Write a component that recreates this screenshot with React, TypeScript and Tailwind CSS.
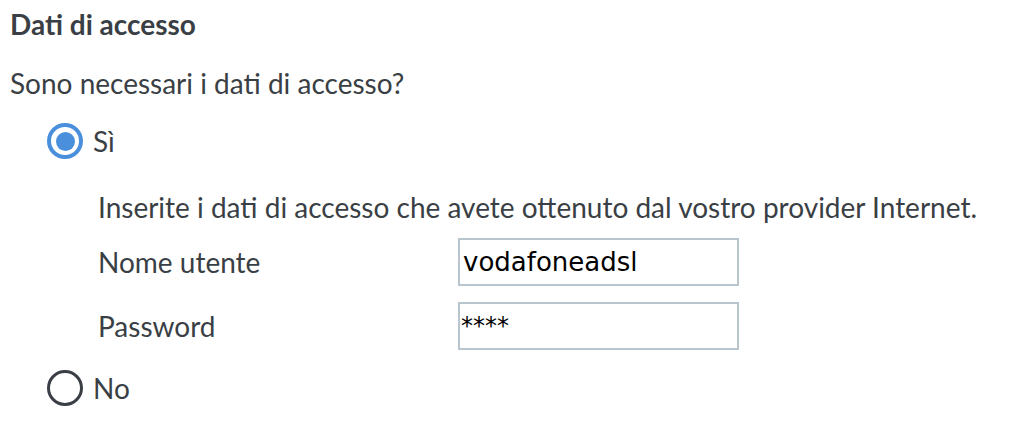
import { useState } from 'react'

function Radio({ checked }: { checked: boolean }) {
  return checked ? (
    <span className="flex h-[36px] w-[36px] items-center justify-center rounded-full border-[4px] border-[#4a8fdb] bg-white">
      <span className="h-[19px] w-[19px] rounded-full bg-[#4a8fdb]"></span>
    </span>
  ) : (
    <span className="block h-[36px] w-[36px] rounded-full border-[3px] border-[#3a3f45] bg-white"></span>
  )
}

export default function App() {
  const [needed, setNeeded] = useState(true)
  const [user, setUser] = useState('vodafoneadsl')
  const [pass, setPass] = useState('****')

  return (
    <div className="h-[436px] w-[1024px] bg-white px-[10px] pt-[7px] font-['Lato','Open_Sans',sans-serif] text-[#3a3f45]">
      <h2 className="text-[28px] font-bold leading-[34px]">Dati di accesso</h2>

      <p className="mt-[25px] text-[28px] leading-[34px]">Sono necessari i dati di accesso?</p>

      <label className="mt-[23px] ml-[37px] flex cursor-pointer items-center gap-[10px] text-[28px] leading-[34px]" onClick={() => setNeeded(true)}>
        <Radio checked={needed} />
        <span>Sì</span>
      </label>

      <div className="ml-[88px]">
        <p className="mt-[31px] text-[28px] leading-[34px]">
          Inserite i dati di accesso che avete ottenuto dal vostro provider Internet.
        </p>

        <div className="mt-[14px] flex items-center">
          <span className="w-[360px] text-[28px] leading-[34px]">Nome utente</span>
          <input
            className="h-[48px] w-[281px] border-2 border-[#b9c5cd] px-[3px] font-['DejaVu_Sans',sans-serif] text-[26px] text-black outline-none"
            value={user}
            onChange={(e) => setUser(e.target.value)}
          />
        </div>

        <div className="mt-[16px] flex items-center">
          <span className="w-[360px] text-[28px] leading-[34px]">Password</span>
          <input
            className="h-[48px] w-[281px] border-2 border-[#b9c5cd] px-[1px] font-['DejaVu_Sans',sans-serif] text-[24px] text-black outline-none"
            value={pass}
            onChange={(e) => setPass(e.target.value)}
          />
        </div>
      </div>

      <label className="mt-[20px] ml-[37px] flex cursor-pointer items-center gap-[10px] text-[28px] leading-[34px]" onClick={() => setNeeded(false)}>
        <Radio checked={!needed} />
        <span>No</span>
      </label>
    </div>
  )
}
